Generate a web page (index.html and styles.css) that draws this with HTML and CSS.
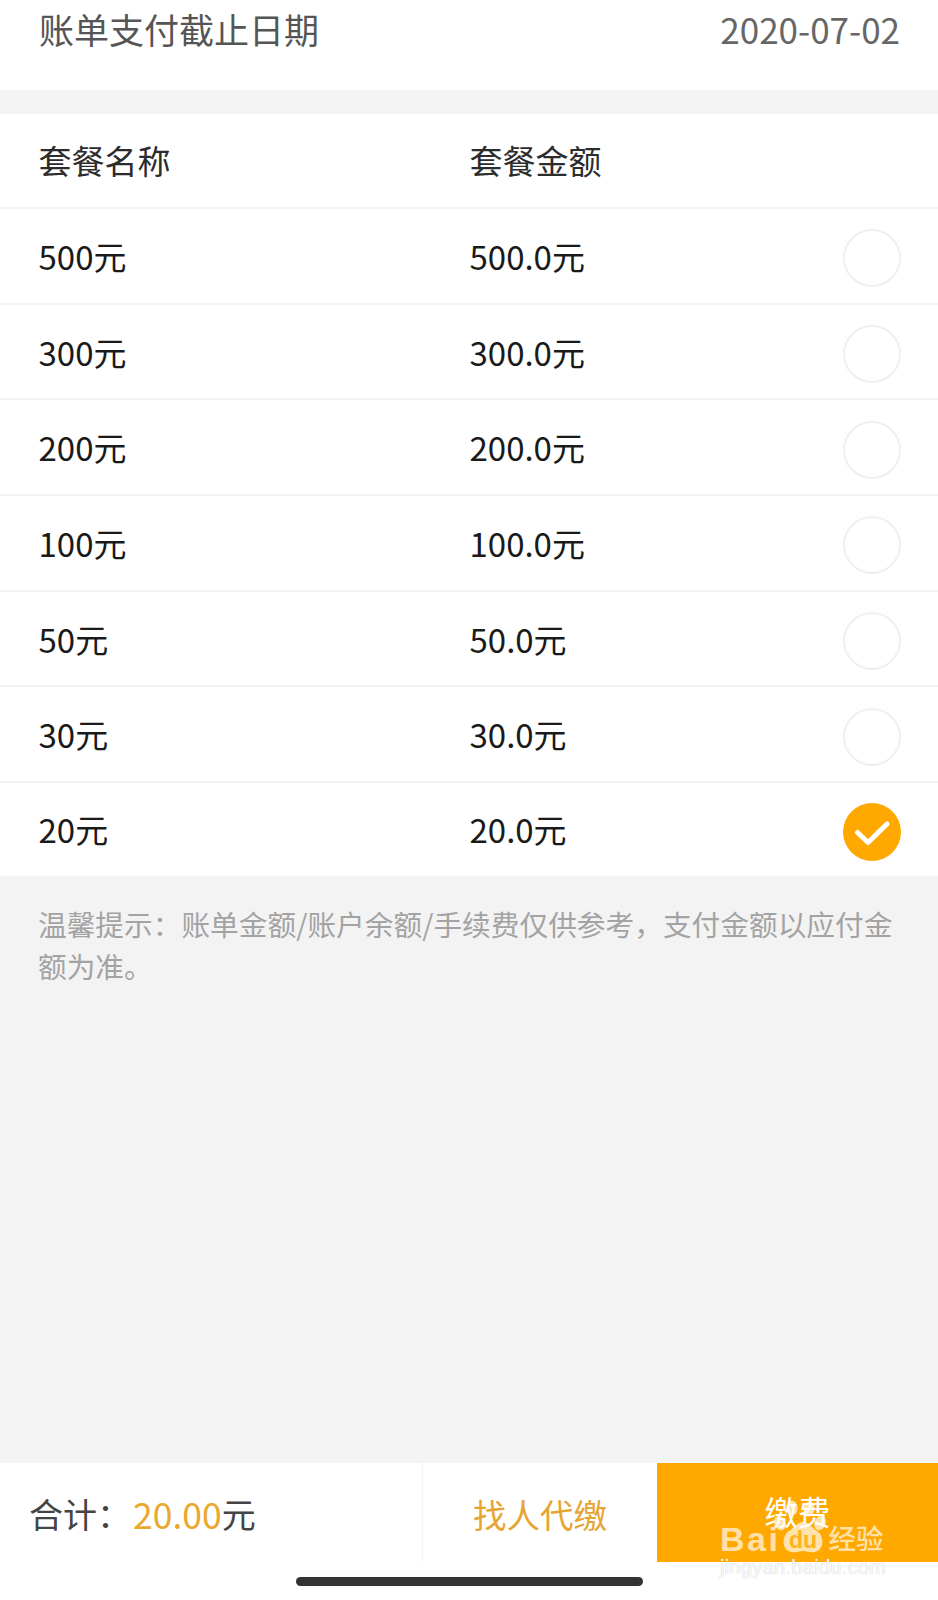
FILE: index.html
```html
<!DOCTYPE html>
<html lang="zh-CN">
<head>
  <meta charset="UTF-8">
  <meta name="viewport" content="width=device-width, initial-scale=1.0">
  <title>缴费</title>
  <link rel="stylesheet" href="styles.css">
</head>
<body>
  <div class="page">
    <div class="due">
      <span class="due-name">账单支付截止日期</span>
      <span class="due-date">2020-07-02</span>
    </div>

    <div class="list">
      <div class="row head">
        <span class="col-name">套餐名称</span>
        <span class="col-money">套餐金额</span>
      </div>
      <div class="row">
        <span class="col-name">500元</span>
        <span class="col-money">500.0元</span>
        <i class="radio"></i>
      </div>
      <div class="row">
        <span class="col-name">300元</span>
        <span class="col-money">300.0元</span>
        <i class="radio"></i>
      </div>
      <div class="row">
        <span class="col-name">200元</span>
        <span class="col-money">200.0元</span>
        <i class="radio"></i>
      </div>
      <div class="row">
        <span class="col-name">100元</span>
        <span class="col-money">100.0元</span>
        <i class="radio"></i>
      </div>
      <div class="row">
        <span class="col-name">50元</span>
        <span class="col-money">50.0元</span>
        <i class="radio"></i>
      </div>
      <div class="row">
        <span class="col-name">30元</span>
        <span class="col-money">30.0元</span>
        <i class="radio"></i>
      </div>
      <div class="row">
        <span class="col-name">20元</span>
        <span class="col-money">20.0元</span>
        <svg class="radio-on" viewBox="0 0 58 58">
          <circle cx="29" cy="29" r="29" fill="#ffa800"/>
          <path d="M14.5 29.5 L25 39.5 L44 21" fill="none" stroke="#fff" stroke-width="5" stroke-linecap="round" stroke-linejoin="round"/>
        </svg>
      </div>
    </div>

    <div class="tip">温馨提示：账单金额/账户余额/手续费仅供参考，支付金额以应付金额为准。</div>

    <div class="foot">
      <div class="total">合计：<em>20.00</em>元</div>
      <div class="agent">找人代缴</div>
      <div class="pay">缴费</div>
    </div>
    <div class="home"><i></i></div>

    <div class="mark">
      <div class="mark-logo">
        <span class="mark-bai">Bai</span>
        <svg class="mark-paw" viewBox="0 0 58 53">
          <ellipse cx="9" cy="23" rx="5.5" ry="7.5" transform="rotate(-20 9 23)"/>
          <ellipse cx="21" cy="8" rx="5.5" ry="7.5" transform="rotate(-6 21 8)"/>
          <ellipse cx="38" cy="9" rx="5.5" ry="7.5" transform="rotate(10 38 9)"/>
          <ellipse cx="49" cy="23" rx="5.5" ry="7.5" transform="rotate(20 49 23)"/>
          <path d="M32 22 C38 22 41 28 46 31 C53 35 54 50 44 52 C39 53 36 51 32 51 C28 51 25 53 20 52 C10 50 11 35 18 31 C23 28 26 22 32 22 Z"/>
          <text x="32" y="48" text-anchor="middle" class="mark-du">du</text>
        </svg>
        <span class="mark-cn">经验</span>
      </div>
      <div class="mark-url">jingyan.baidu.com</div>
    </div>
  </div>
</body>
</html>
```

FILE: styles.css
```css
* {
  box-sizing: border-box;
}

body {
  margin: 0;
  background: #f3f3f3;
  font-family: "Noto Sans CJK SC", "Noto Sans", sans-serif;
}

.page {
  position: relative;
  width: 938px;
  height: 1600px;
  display: flex;
  flex-direction: column;
  overflow: hidden;
}

.due {
  height: 90px;
  padding: 0 38px 33px 39px;
  background: #fff;
  display: flex;
  justify-content: space-between;
  align-items: center;
  font-size: 35px;
  color: #666;
}

.due-name {
  color: #555;
}

.list {
  margin-top: 24px;
  background: #fff;
}

.row {
  height: 95.7px;
  padding: 0 37px 0 38.5px;
  display: flex;
  align-items: center;
  font-size: 33px;
  color: #1a1a1a;
  border-bottom: 2px solid #f3f3f3;
}

.row:last-child {
  height: 92.7px;
  border-bottom: none;
}

.row.head {
  height: 95px;
  color: #2c2c2c;
}

.row.head span {
  margin-top: -2px;
}

.col-name {
  width: 431px;
}

.col-money {
  flex: 1;
}

.radio {
  width: 58px;
  height: 58px;
  margin-top: 5px;
  border: 2px solid #f0f0f0;
  border-radius: 50%;
}

.radio-on {
  width: 58px;
  height: 58px;
  margin-top: 5px;
}

.tip {
  padding: 27px 38px 0;
  font-size: 28.7px;
  line-height: 42px;
  color: #a3a3a3;
  flex: 1;
}

.foot {
  height: 99px;
  background: #fff;
  display: flex;
  align-items: stretch;
  font-size: 34px;
}

.total {
  width: 423px;
  padding: 2px 0 0 29px;
  display: flex;
  align-items: center;
  color: #444;
  border-right: 1px solid #f3f3f3;
}

.total em {
  margin-left: 2px;
  font-style: normal;
  color: #eaa82f;
  font-size: 35.5px;
}

.agent {
  width: 234px;
  padding-top: 2px;
  display: flex;
  align-items: center;
  justify-content: center;
  color: #e6a532;
  font-size: 33.5px;
}

.pay {
  flex: 1;
  display: flex;
  align-items: center;
  justify-content: center;
  background: #ffa800;
  color: #fff;
  padding-bottom: 4px;
  font-size: 33px;
}

.home {
  height: 38px;
  background: #fff;
  display: flex;
  justify-content: center;
  padding-top: 15px;
}

.home i {
  width: 347px;
  height: 9px;
  background: #333;
  border-radius: 5px;
}

/* 水印 */
.mark {
  position: absolute;
  left: 720px;
  top: 1500px;
  width: 172px;
  color: rgba(255, 255, 255, 0.68);
}

.mark-logo {
  display: flex;
  align-items: flex-end;
  height: 53px;
}

.mark-bai {
  font-family: "Liberation Sans", sans-serif;
  font-weight: bold;
  font-size: 34px;
  letter-spacing: 2.5px;
  line-height: 28px;
}

.mark-paw {
  flex: none;
  width: 58px;
  height: 53px;
  margin-left: -9px;
  fill: rgba(255, 255, 255, 0.68);
}

.mark-du {
  font-family: "Liberation Sans", sans-serif;
  font-weight: bold;
  font-size: 23px;
  fill: #ffb21e;
}

.mark-cn {
  margin-left: -1px;
  font-size: 27.5px;
  font-weight: 500;
  line-height: 32px;
  white-space: nowrap;
}

.mark-url {
  margin-top: 2px;
  font-family: "Liberation Sans", sans-serif;
  font-size: 20px;
  letter-spacing: 0.3px;
  line-height: 24px;
  color: #fafafa;
  text-shadow: 0 0 1px #bbb;
  white-space: nowrap;
}
```
